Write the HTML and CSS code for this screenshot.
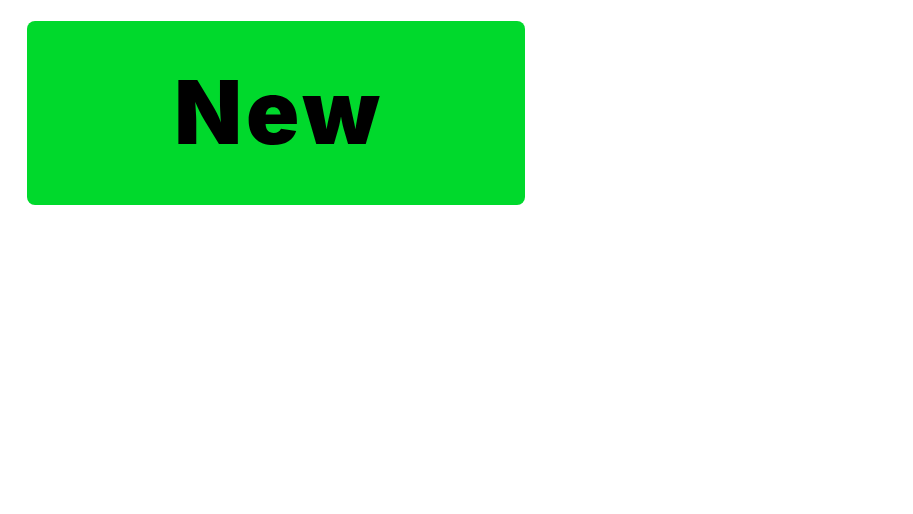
FILE: index.html
```html
<!DOCTYPE html>
<html>
<head>
<meta charset="utf-8">
<link rel="stylesheet" href="styles.css">
</head>
<body>
<div class="page">
  <button class="new-btn">New</button>
</div>
</body>
</html>
```
FILE: styles.css
```css
html, body {
  margin: 0;
  padding: 0;
  background: #ffffff;
}
.page {
  padding: 21px 0 0 27px;
  display: flex;
  align-items: flex-start;
}
.new-btn {
  width: 498px;
  height: 184px;
  border: none;
  border-radius: 8px;
  background: #00d92c;
  color: #000000;
  font-family: Inter, "Liberation Sans", sans-serif;
  font-weight: 900;
  font-size: 88px;
  line-height: 1;
  letter-spacing: 4px;
  padding: 0 0 3px 6px;
  display: flex;
  align-items: center;
  justify-content: center;
}
```
